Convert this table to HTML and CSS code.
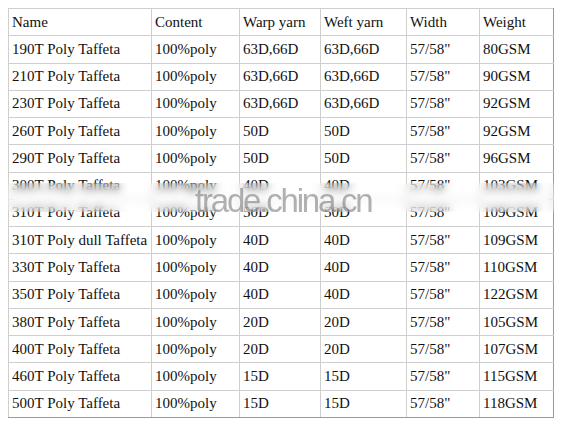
FILE: index.html
```html
<!DOCTYPE html>
<html>
<head>
<meta charset="utf-8">
<link rel="stylesheet" href="styles.css">
</head>
<body>
<div class="wrap">
<table class="spec">
<colgroup>
<col class="c1"><col class="c2"><col class="c3"><col class="c4"><col class="c5"><col class="c6">
</colgroup>
<tr><td>Name</td><td>Content</td><td>Warp yarn</td><td>Weft yarn</td><td>Width</td><td>Weight</td></tr>
<tr><td>190T Poly Taffeta</td><td>100%poly</td><td>63D,66D</td><td>63D,66D</td><td>57/58"</td><td>80GSM</td></tr>
<tr><td>210T Poly Taffeta</td><td>100%poly</td><td>63D,66D</td><td>63D,66D</td><td>57/58"</td><td>90GSM</td></tr>
<tr><td>230T Poly Taffeta</td><td>100%poly</td><td>63D,66D</td><td>63D,66D</td><td>57/58"</td><td>92GSM</td></tr>
<tr><td>260T Poly Taffeta</td><td>100%poly</td><td>50D</td><td>50D</td><td>57/58"</td><td>92GSM</td></tr>
<tr><td>290T Poly Taffeta</td><td>100%poly</td><td>50D</td><td>50D</td><td>57/58"</td><td>96GSM</td></tr>
<tr><td>300T Poly Taffeta</td><td>100%poly</td><td>40D</td><td>40D</td><td>57/58"</td><td>103GSM</td></tr>
<tr><td>310T Poly Taffeta</td><td>100%poly</td><td>50D</td><td>50D</td><td>57/58"</td><td>109GSM</td></tr>
<tr><td>310T Poly dull Taffeta</td><td>100%poly</td><td>40D</td><td>40D</td><td>57/58"</td><td>109GSM</td></tr>
<tr><td>330T Poly Taffeta</td><td>100%poly</td><td>40D</td><td>40D</td><td>57/58"</td><td>110GSM</td></tr>
<tr><td>350T Poly Taffeta</td><td>100%poly</td><td>40D</td><td>40D</td><td>57/58"</td><td>122GSM</td></tr>
<tr><td>380T Poly Taffeta</td><td>100%poly</td><td>20D</td><td>20D</td><td>57/58"</td><td>105GSM</td></tr>
<tr><td>400T Poly Taffeta</td><td>100%poly</td><td>20D</td><td>20D</td><td>57/58"</td><td>107GSM</td></tr>
<tr><td>460T Poly Taffeta</td><td>100%poly</td><td>15D</td><td>15D</td><td>57/58"</td><td>115GSM</td></tr>
<tr><td>500T Poly Taffeta</td><td>100%poly</td><td>15D</td><td>15D</td><td>57/58"</td><td>118GSM</td></tr>
</table>
<div class="smear"></div>
<div class="watermark">trade.china.cn</div>
</div>
</body>
</html>
```
FILE: styles.css
```css
html, body {
  background: #ffffff;
}
body {
  margin: 8px;
}
.wrap {
  position: relative;
  width: 546px;
}
.spec {
  border-collapse: collapse;
  table-layout: fixed;
  width: 545px;
  font-family: "Liberation Serif", "Times New Roman", serif;
  font-size: 15px;
  color: #111111;
}
.c1 { width: 143px; }
.c2 { width: 88px; }
.c3 { width: 81px; }
.c4 { width: 86px; }
.c5 { width: 73px; }
.c6 { width: 74px; }
.spec td {
  border: 1px solid #cfcfcf;
  height: 26.27px;
  padding: 0 3px;
  vertical-align: middle;
  white-space: nowrap;
  line-height: 17px;
}
.spec tr:last-child td {
  border-bottom-color: #9a9a9a;
}
.spec td:last-child {
  border-right-color: #9a9a9a;
}
.smear {
  position: absolute;
  left: 0;
  width: 548px;
  top: 175px;
  height: 29px;
  backdrop-filter: blur(4px);
  -webkit-backdrop-filter: blur(4px);
}
.watermark {
  position: absolute;
  left: 187px;
  top: 177px;
  font-family: "Liberation Sans", Arial, sans-serif;
  font-size: 33px;
  line-height: 32px;
  letter-spacing: -2.2px;
  color: rgba(100, 100, 100, 0.5);
  white-space: nowrap;
}
```
